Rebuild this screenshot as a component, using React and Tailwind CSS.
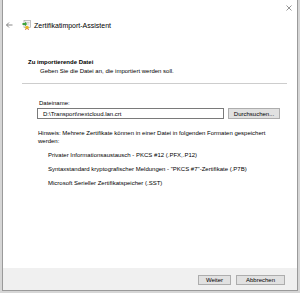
export default function App() {
  return (
    <div className="w-[300px] h-[293px] bg-[#d6d6d6] overflow-hidden" style={{ fontFamily: '"Liberation Sans", Arial, sans-serif' }}>
      <div className="ml-[2px] w-[296px] h-[291px] bg-white border-l border-r border-b border-[#9a9a9a] flex flex-col">
        {/* top bar */}
        <div className="h-[16px] flex items-center justify-end pr-[4px]">
          <svg width="6" height="6" viewBox="0 0 6 6" className="mr-[1px]">
            <path d="M0.5 0.5 L5.5 5.5 M5.5 0.5 L0.5 5.5" stroke="#7a7a7a" strokeWidth="0.8" />
          </svg>
        </div>
        {/* title row */}
        <div className="h-[18px] flex items-center">
          <svg width="7" height="6" viewBox="0 0 7 6" className="ml-[3px]">
            <path d="M0.5 3 H6.5 M0.5 3 L3 0.5 M0.5 3 L3 5.5" stroke="#6a6a6a" strokeWidth="0.8" fill="none" />
          </svg>
          <svg width="9" height="10" viewBox="0 0 9 10" className="ml-[9px]">
            <rect x="2" y="0.5" width="6.5" height="7" fill="#f4f4f4" stroke="#9a9a9a" strokeWidth="0.6" />
            <path d="M3.5 2.5 H7.5 M3.5 4 H7" stroke="#b0b0b0" strokeWidth="0.5" />
            <path d="M0.5 3 L3 3 L3 1.5 L5 4 L3 6.5 L3 5 L0.5 5 Z" fill="#3ca33c" />
            <circle cx="5" cy="7.5" r="1.8" fill="#e8b828" />
            <path d="M4 8.5 L3.5 10 M6 8.5 L6.5 10" stroke="#d06020" strokeWidth="0.8" />
          </svg>
          <span className="ml-[3px] text-[7px] leading-[9px] text-black">Zertifikatimport-Assistent</span>
        </div>
        {/* heading */}
        <div className="mt-[24px] pl-[25px] text-[6px] leading-[8px] font-bold text-black">Zu importierende Datei</div>
        <div className="mt-[1px] pl-[37px] text-[6px] leading-[8px] text-black">Geben Sie die Datei an, die importiert werden soll.</div>
        <div className="mt-[8px] ml-[19px] mr-[10px] h-px bg-[#cdcdcd]" />
        {/* body */}
        <div className="mt-[15px] pl-[36px] text-[6px] leading-[8px] text-black">Dateiname:</div>
        <div className="mt-[1px] pl-[34px] flex items-center">
          <div className="w-[187px] h-[11px] border border-[#7a7a7a] bg-white flex items-center pl-[5px] text-[6px] leading-[8px] text-black">
            D:\Transport\nextcloud.lan.crt
          </div>
          <div className="ml-[4px] w-[52px] h-[11px] border border-[#adadad] bg-[#e1e1e1] flex items-center justify-center text-[6px] leading-[8px] text-black">
            Durchsuchen...
          </div>
        </div>
        <div className="mt-[10px] pl-[35px] pr-[10px] text-[6px] leading-[8px] text-black">
          Hinweis: Mehrere Zertifikate können in einer Datei in folgenden Formaten gespeichert werden:
        </div>
        <div className="mt-[6px] pl-[45px] text-[6px] leading-[8px] text-black">Privater Informationsaustausch - PKCS #12 (.PFX,.P12)</div>
        <div className="mt-[6px] pl-[45px] text-[6px] leading-[8px] text-black">Syntaxstandard kryptografischer Meldungen - "PKCS #7"-Zertifikate (.P7B)</div>
        <div className="mt-[6px] pl-[45px] text-[6px] leading-[8px] text-black">Microsoft Serieller Zertifikatspeicher (.SST)</div>
        <div className="flex-1" />
        {/* footer */}
        <div className="h-[22px] bg-[#f0f0f0] flex items-center justify-end pr-[12px] pt-[2px]">
          <div className="w-[33px] h-[10px] border border-[#adadad] bg-[#e1e1e1] flex items-center justify-center text-[6px] leading-[8px] text-black">Weiter</div>
          <div className="ml-[5px] w-[49px] h-[10px] border border-[#adadad] bg-[#e1e1e1] flex items-center justify-center text-[6px] leading-[8px] text-black">Abbrechen</div>
        </div>
      </div>
    </div>
  );
}
